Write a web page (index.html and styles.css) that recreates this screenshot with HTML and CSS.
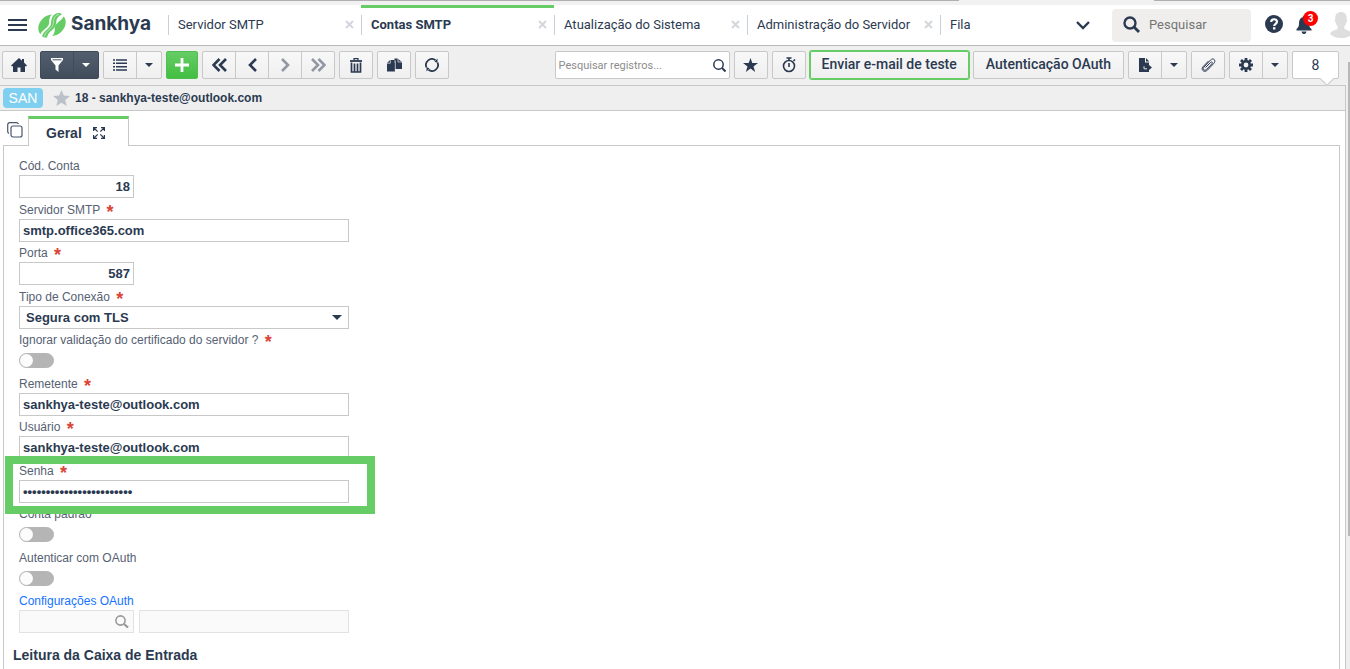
FILE: index.html
```html
<!DOCTYPE html>
<html lang="pt-BR">
<head>
    <meta charset="UTF-8">
    <meta name="viewport" content="width=device-width, initial-scale=1.0">
    <title>Contas SMTP</title>
    <link rel="stylesheet" href="styles.css">
</head>
<body>
    <div class="top-strip"></div>
    <header class="header">
        <button class="icon-button menu-button" aria-label="Menu">
            <svg width="19" height="12" viewBox="0 0 19 12"><path d="M0 1h19M0 6h19M0 11h19" stroke="#2b3a51" stroke-width="2"/></svg>
        </button>
        <a class="logo" href="#">
            <svg width="28" height="25" viewBox="0 0 28 25" fill="#66cc66">
                <path d="M14 1.500C12 3 11.300 5.500 11.200 8.500 11 12 10.500 13 7.500 15.500 5.500 17 3.700 18.500 2.500 21 1 20 0 17 .3 14.500 1 8 6.500 2 14 1.500z"/>
                <path d="M20 0c2 0 3 .3 4 1.200C20 3.500 18.500 5.500 18.300 9 18 13 17 14.500 13.500 17.500 11 19.500 10 21 9 24.500c-2 .3-3.500 0-5-1.200 1-2.800 2.500-4.800 5.500-7.300 3-2.500 3.500-4 3.700-7.500C13.500 4 16 .8 20 0z"/>
                <path d="M14 23C16 21.500 16.700 19 16.800 16 17 12.500 17.500 11.500 20.500 9c2-1.500 3.800-3 5-5.500C27 4.500 28 7.500 27.700 10 27 16.500 21.500 22.500 14 23z"/>
                <path d="M21 1.500c-4.500 1-5.300 4-5.500 7.500-.2 3.500-1.500 5-4 7.300C9 18.500 7.500 19.500 6.500 23.500" fill="none" stroke="#fff" stroke-width=".5"/>
            </svg>
            <span>Sankhya</span>
        </a>
        <nav class="tabs">
            <div class="tab"><a href="#">Servidor SMTP</a><button class="close" aria-label="Fechar"><svg width="9" height="9" viewBox="0 0 9 9"><path d="M1 1l7 7M8 1L1 8"/></svg></button></div>
            <div class="tab active"><a href="#">Contas SMTP</a><button class="close" aria-label="Fechar"><svg width="9" height="9" viewBox="0 0 9 9"><path d="M1 1l7 7M8 1L1 8"/></svg></button></div>
            <div class="tab"><a href="#">Atualização do Sistema</a><button class="close" aria-label="Fechar"><svg width="9" height="9" viewBox="0 0 9 9"><path d="M1 1l7 7M8 1L1 8"/></svg></button></div>
            <div class="tab"><a href="#">Administração do Servidor</a><button class="close" aria-label="Fechar"><svg width="9" height="9" viewBox="0 0 9 9"><path d="M1 1l7 7M8 1L1 8"/></svg></button></div>
            <div class="tab"><a href="#">Fila</a></div>
        </nav>
        <button class="icon-button more-tabs" aria-label="Mais abas">
            <svg width="14" height="9" viewBox="0 0 14 9"><path d="M1 1l6 6 6-6" fill="none" stroke="#2b3a51" stroke-width="2.400"/></svg>
        </button>
        <label class="global-search">
            <svg width="17" height="17" viewBox="0 0 17 17"><circle cx="7" cy="7" r="5.500" fill="none" stroke="#2b3a51" stroke-width="2.400"/><path d="M11 11l5 5" stroke="#2b3a51" stroke-width="2.800"/></svg>
            <input type="text" placeholder="Pesquisar" aria-label="Pesquisar">
        </label>
        <button class="icon-button help" aria-label="Ajuda">
            <svg width="18" height="18" viewBox="0 0 18 18"><circle cx="9" cy="9" r="9" fill="#2b3a51"/><path d="M6.200 7c0-3.600 5.800-3.600 5.800-.2C12 8.800 9.200 8.800 9.200 11" fill="none" stroke="#fff" stroke-width="2.200"/><rect x="8" y="12.200" width="2.400" height="2.300" fill="#fff"/></svg>
        </button>
        <button class="icon-button bell" aria-label="Notificações">
            <svg width="16" height="18" viewBox="0 0 16 18" fill="#2b3a51"><path d="M8 0c.8 0 1.300.6 1.300 1.300C12 2 13 4.500 13 7.500c0 3 .8 4 2.500 5.500v1.500H.5V13C2.200 11.500 3 10.500 3 7.500c0-3 1-5.500 3.700-6.200C6.700.6 7.200 0 8 0z"/><path d="M5.500 15.500h5C10 17.500 9 18 8 18s-2-.5-2.500-2.500z"/></svg>
            <span class="badge">3</span>
        </button>
        <svg class="avatar" width="22" height="28" viewBox="0 0 22 28" fill="#dedede"><path d="M11 1c3.700 0 6 2.300 6 6.500 0 1-.1 1.500.3 2 .3.700-.1 2-.8 2.500-.5 2-1 3-2 4v2c0 2 7.500 2 7.500 6C20 26.500 16 28 11 28S2 26.500 0 24c0-4 7.500-4 7.500-6v-2c-1-1-1.500-2-2-4-.7-.5-1.100-1.800-.8-2.500.4-.5.300-1 .3-2C5 3.300 7.300 1 11 1z"/></svg>
    </header>

    <main class="screen">
        <div class="toolbar">
            <div class="group"><button class="tool" aria-label="Início"><svg width="16" height="14" viewBox="0 0 16 14" fill="#2b3a51"><path d="M8 0l3 2.700V1h2v3.500l3 3-1 1L14 8v6H9.500V9.500h-3V14H2V8l-1 .5-1-1z"/></svg></button></div>
            <div class="group dark">
                <button class="tool" aria-label="Filtro"><svg width="12" height="14" viewBox="0 0 12 14"><path d="M0 0h12v2L7.500 7.500V14l-3-2.500v-4L0 2z" fill="#fff"/><path d="M1.500 1.800h9" stroke="#485363"/></svg></button>
                <button class="tool narrow" aria-label="Opções de filtro"><span class="caret"></span></button>
            </div>
            <div class="group">
                <button class="tool" aria-label="Lista"><svg width="14" height="12" viewBox="0 0 14 12" stroke="#2b3a51" stroke-width="1.500"><path d="M0 1h2M3 1h11M0 4.300h2M3 4.300h11M0 7.700h2M3 7.700h11M0 11h2M3 11h11"/></svg></button>
                <button class="tool narrow" aria-label="Opções de lista"><span class="caret"></span></button>
            </div>
            <div class="group green"><button class="tool" aria-label="Adicionar"><svg width="14" height="14" viewBox="0 0 14 14"><path d="M7 0v14M0 7h14" stroke="#fff" stroke-width="2.800"/></svg></button></div>
            <div class="group">
                <button class="tool" aria-label="Primeiro"><svg class="arrow" width="15" height="14" viewBox="0 0 15 14"><path d="M7.500 1l-6 6 6 6M14 1L8 7l6 6"/></svg></button>
                <button class="tool" aria-label="Anterior"><svg class="arrow" width="9" height="14" viewBox="0 0 9 14"><path d="M8 1L2 7l6 6"/></svg></button>
                <button class="tool" aria-label="Próximo" disabled><svg class="arrow" width="9" height="14" viewBox="0 0 9 14"><path d="M1 1l6 6-6 6"/></svg></button>
                <button class="tool" aria-label="Último" disabled><svg class="arrow" width="15" height="14" viewBox="0 0 15 14"><path d="M1 1l6 6-6 6M7.500 1l6 6-6 6"/></svg></button>
            </div>
            <div class="group"><button class="tool" aria-label="Excluir"><svg width="12" height="15" viewBox="0 0 12 15" fill="none" stroke="#2b3a51"><path d="M4 2.500V.600h4v1.900" stroke-width="1.200"/><path d="M0 3h12" stroke-width="1.800"/><path d="M1.500 4.500v9.500h9V4.500M4.500 5.500v8M7.500 5.500v8" stroke-width="1.700"/></svg></button></div>
            <div class="group"><button class="tool" aria-label="Duplicar"><svg width="15" height="14" viewBox="0 0 15 14" fill="#2b3a51"><path d="M7.500.500h3L15 4v7H7.500z"/><path d="M3 2h4.500v3H8v8.500H0V5z"/><path d="M0 5.200h3.300V2M11 .500V4h4M8.300 2.500v11" fill="none" stroke="#f2f2f2" stroke-width=".7"/></svg></button></div>
            <div class="group"><button class="tool" aria-label="Atualizar"><svg width="14" height="14" viewBox="0 0 14 14"><path d="M1.500 9.500A6 6 0 0 1 10.500 2.200M12.500 4.500A6 6 0 0 1 3.500 11.800" fill="none" stroke="#2b3a51" stroke-width="1.800"/><path d="M9.500 3.800L12.500.5v4.300zM4.500 10.200L1.500 13.500V9.200z" fill="#2b3a51"/></svg></button></div>

            <label class="record-search">
                <input type="text" placeholder="Pesquisar registros..." aria-label="Pesquisar registros">
                <svg width="13" height="13" viewBox="0 0 13 13" fill="none" stroke="#2b3a51"><circle cx="5.500" cy="5.500" r="4.700" stroke-width="1.500"/><path d="M9 9l3.500 3.500" stroke-width="2"/></svg>
            </label>
            <div class="group"><button class="tool" aria-label="Favorito"><svg width="15" height="14" viewBox="0 0 15 14" fill="#2b3a51"><path d="M7.500 0l1.800 5H15l-4.500 3.400L12.200 14 7.500 10.600 2.800 14l1.700-5.600L0 5h5.700z"/></svg></button></div>
            <div class="group"><button class="tool" aria-label="Cronômetro"><svg width="14" height="16" viewBox="0 0 14 16" fill="none" stroke="#2b3a51" stroke-width="1.600"><circle cx="7" cy="9" r="5.500"/><path d="M4.500 1h5M7 1v3M7 6v4M11.500 4L13 2.500"/></svg></button></div>
            <button class="text-button highlighted">Enviar e-mail de teste</button>
            <button class="text-button">Autenticação OAuth</button>
            <div class="group">
                <button class="tool" aria-label="Exportar"><svg width="13" height="14" viewBox="0 0 13 14" fill="#2b3a51"><path d="M0 0h6v4.500h4V7l3 2.500-3 2.500v2H0z"/><path d="M7 0l3.200 3.500H7z"/><path d="M5 8.200v2.600h3" fill="none" stroke="#f2f2f2" stroke-width=".9"/></svg></button>
                <button class="tool narrow" aria-label="Opções de exportação"><span class="caret"></span></button>
            </div>
            <div class="group"><button class="tool" aria-label="Anexos"><svg width="15" height="14" viewBox="0 0 15 14" fill="none" stroke="#2b3a51" stroke-width="1"><path d="M4.500 9.500l5-5c1.300-1.300 2.600 0 1.400 1.300L5.600 11.300c-2.200 2.200-4.600 0-2.600-2.300L9.500 2c3-2.800 6 .5 3.300 3.400L6.600 12c-3 3-7.200.200-4.700-3.200L7.500 3"/></svg></button></div>
            <div class="group">
                <button class="tool" aria-label="Configurações"><svg width="14" height="14" viewBox="0 0 14 14"><path d="M7 0v14M0 7h14M2 2l10 10M12 2L2 12" stroke="#2b3a51" stroke-width="2.800"/><circle cx="7" cy="7" r="3.700" fill="#f4f4f4" stroke="#2b3a51" stroke-width="2.600"/></svg></button>
                <button class="tool narrow" aria-label="Opções de configuração"><span class="caret"></span></button>
            </div>
            <div class="counter">8</div>
        </div>

        <div class="content">
            <div class="record-bar">
                <span class="tag">SAN</span>
                <svg width="17" height="16" viewBox="0 0 17 16" fill="#bcc0c8"><path d="M8.500 0l2.300 5.500 6.200.4-4.800 4 1.500 6.100-5.200-3.300L3.300 16l1.500-6.100-4.800-4 6.200-.4z"/></svg>
                <strong>18 - sankhya-teste@outlook.com</strong>
            </div>
            <div class="form-tabs">
                <button class="icon-button copy-button" aria-label="Modo grade"><svg width="16" height="16" viewBox="0 0 16 16" fill="none" stroke="#4a566b" stroke-width="1.200"><rect x="4" y="4" width="11" height="11" rx="2"/><path d="M2 11.500C1 11 .7 10.500.7 9.500V3C.7 1.500 1.500.700 3 .700h6.500c1 0 1.500.300 2 1.300"/></svg></button>
                <div class="form-tab">
                    <span>Geral</span>
                    <svg width="12" height="12" viewBox="0 0 12 12" fill="none" stroke="#2b3a51" stroke-width="1.200"><path d="M.6 4V.6H4M8 .6h3.400V4M11.400 8v3.400H8M4 11.400H.6V8M1 1l3.700 3.700M11 1L7.300 4.700M11 11L7.300 7.300M1 11l3.700-3.700"/></svg>
                </div>
            </div>
            <div class="panel">
                <form class="fields" autocomplete="off">
                    <div class="field">
                        <label for="codigo">Cód. Conta</label>
                        <input class="box short" id="codigo" type="text" value="18">
                    </div>
                    <div class="field">
                        <label for="servidor">Servidor SMTP <b class="required"></b></label>
                        <input class="box" id="servidor" type="text" value="smtp.office365.com">
                    </div>
                    <div class="field">
                        <label for="porta">Porta <b class="required"></b></label>
                        <input class="box short" id="porta" type="text" value="587">
                    </div>
                    <div class="field">
                        <label for="conexao">Tipo de Conexão <b class="required"></b></label>
                        <div class="select-wrap">
                            <select class="box" id="conexao"><option>Segura com TLS</option></select>
                        </div>
                    </div>
                    <div class="field">
                        <label for="ignorar">Ignorar validação do certificado do servidor ? <b class="required"></b></label>
                        <input class="toggle" id="ignorar" type="checkbox">
                    </div>
                    <div class="field">
                        <label for="remetente">Remetente <b class="required"></b></label>
                        <input class="box" id="remetente" type="text" value="sankhya-teste@outlook.com">
                    </div>
                    <div class="field">
                        <label for="usuario">Usuário <b class="required"></b></label>
                        <input class="box" id="usuario" type="text" value="sankhya-teste@outlook.com">
                    </div>
                    <div class="field marked">
                        <label for="senha">Senha <b class="required"></b></label>
                        <input class="box" id="senha" type="password" value="abcdefghijklmnopqrstuvwx">
                    </div>
                    <div class="field">
                        <label for="padrao">Conta padrão</label>
                        <input class="toggle" id="padrao" type="checkbox">
                    </div>
                    <div class="field">
                        <label for="oauth">Autenticar com OAuth</label>
                        <input class="toggle" id="oauth" type="checkbox">
                    </div>
                    <div class="field">
                        <label for="config"><a href="#">Configurações OAuth</a></label>
                        <div class="lookup">
                            <div class="lookup-code">
                                <input id="config" type="text" disabled>
                                <svg width="14" height="13" viewBox="0 0 14 13" fill="none" stroke="#999"><circle cx="5.500" cy="5.500" r="4.600" stroke-width="1.600"/><path d="M9 9l4 3.500" stroke-width="2.200"/></svg>
                            </div>
                            <input class="lookup-name" type="text" aria-label="Descrição da configuração" disabled>
                        </div>
                    </div>
                </form>
                <h2>Leitura da Caixa de Entrada</h2>
            </div>
        </div>
        <div class="scrollbar"></div>
    </main>
</body>
</html>
```

FILE: styles.css
```css
*,
*::before,
*::after {
    box-sizing: border-box;
}
body {
    margin: 0;
    height: 100vh;
    overflow: hidden;
    display: flex;
    flex-direction: column;
    background-color: #f0efef;
    color: #2b3a51;
    font-family: "Liberation Sans", Arial, sans-serif;
    font-size: 12px;
}
button,
input,
select {
    font: inherit;
    color: inherit;
    margin: 0;
    padding: 0;
}
a {
    color: inherit;
    text-decoration: none;
}
svg {
    display: block;
    flex: none;
}
.icon-button {
    border: 0;
    background: none;
    flex: none;
}

/* header */
.top-strip {
    flex: none;
    height: 5px;
    background: linear-gradient(to right, #b0aeb0 959px, transparent 959px, transparent 1154px, #b0aeb0 1154px) top / 100% 1px no-repeat #f2f1f2;
}
.header {
    flex: none;
    display: flex;
    align-items: center;
    height: 41px;
    padding-left: 8px;
    overflow: hidden;
    background-color: #fff;
    border-bottom: 1px solid #b8b8b8;
    font-family: Roboto, sans-serif;
    font-size: 13px;
}
.logo {
    display: flex;
    align-items: center;
    gap: 5px;
    width: 130px;
    margin-left: 11px;
    font-family: Inter, sans-serif;
    font-size: 19px;
    font-weight: 700;
    line-height: 24px;
}
.logo span {
    padding-bottom: 2px;
}
.tabs {
    flex: 1;
    min-width: 0;
    display: flex;
    align-self: stretch;
    overflow: hidden;
}
.tab {
    flex: 0 0 193px;
    display: flex;
    align-items: center;
    justify-content: space-between;
    padding: 0 7px 1px 10px;
    background: linear-gradient(#c9cfda, #c9cfda) left 10px / 1px 20px no-repeat;
}
.tab:last-child {
    flex: 1;
}
.tab.active {
    background: linear-gradient(#66cc66, #66cc66) top / 100% 3px no-repeat, linear-gradient(#c9cfda, #c9cfda) left 10px / 1px 20px no-repeat;
    font-weight: 700;
}
.close {
    border: 0;
    background: none;
}
.close path {
    stroke: #d3d6dc;
    stroke-width: 2;
}
.more-tabs {
    margin-right: 22px;
}
.global-search {
    flex: none;
    display: flex;
    align-items: center;
    gap: 9px;
    width: 139px;
    height: 33px;
    padding: 0 11px 2px;
    background-color: #f0eeed;
    border-radius: 4px;
}
.global-search input {
    width: 100%;
    min-width: 0;
    border: 0;
    background: none;
}
.help {
    margin-left: 14px;
    padding-bottom: 2px;
}
.bell {
    position: relative;
    margin-left: 13px;
}
.badge {
    position: absolute;
    top: -5px;
    left: 7px;
    width: 15px;
    height: 15px;
    border-radius: 50%;
    background-color: #f00;
    color: #fff;
    font-size: 10px;
    font-weight: 700;
    line-height: 15px;
}
.avatar {
    margin-left: 18px;
    margin-right: -2px;
    padding-bottom: 1px;
}

/* toolbar */
.screen {
    flex: 1;
    min-height: 0;
    display: flex;
    flex-direction: column;
    position: relative;
}
.toolbar {
    flex: none;
    display: flex;
    align-items: center;
    gap: 4px;
    height: 39px;
    padding: 0 11px 1px 2px;
}
.group {
    display: flex;
    height: 28px;
    border: 1px solid #c8c8c8;
    border-radius: 2px;
    background: linear-gradient(#f8f8f8, #efefef);
}
.tool {
    display: flex;
    align-items: center;
    justify-content: center;
    width: 32px;
    border: 0;
    background: none;
}
.tool + .tool {
    width: 33px;
    border-left: 1px solid #c8c8c8;
}
.tool + .narrow {
    width: 25px;
}
.caret {
    border: 4px solid transparent;
    border-top-color: #2b3a51;
    border-bottom: 0;
}
.dark {
    border-color: #3f4958;
    background: linear-gradient(#525d6e, #424d5c);
}
.dark .narrow {
    border-left-color: #414b5a;
}
.dark .caret {
    border-top-color: #fff;
}
.green {
    border-color: #4fc04f;
    background: linear-gradient(#66cc66, #42be42);
}
.green .tool {
    width: 30px;
}
.arrow {
    fill: none;
    stroke: #2b3a51;
    stroke-width: 2.6;
}
.tool:disabled .arrow {
    stroke: #9298a3;
}
.record-search {
    display: flex;
    align-items: center;
    width: 175px;
    height: 28px;
    margin-left: auto;
    padding: 0 3px;
    background-color: #fff;
    border: 1px solid #c8c8c8;
    border-radius: 2px;
}
.record-search input {
    flex: 1;
    min-width: 0;
    border: 0;
    font-family: Roboto, sans-serif;
    font-size: 11px;
}
.record-search input::placeholder {
    color: #8c8c8c;
}
.text-button {
    flex: none;
    height: 28px;
    padding: 0 12px 2px;
    border: 1px solid #c8c8c8;
    border-radius: 2px;
    background: linear-gradient(#f8f8f8, #efefef);
    font-family: Roboto, sans-serif;
    font-size: 14px;
    font-weight: 500;
}
.highlighted {
    padding: 0 11px 2px;
    border-color: #66cc66;
    box-shadow: 0 0 0 1px #66cc66;
}
.counter {
    position: relative;
    width: 47px;
    height: 28px;
    border: 1px solid #c8c8c8;
    border-radius: 2px;
    background-color: #fff;
    font-family: Roboto, sans-serif;
    font-size: 14px;
    line-height: 27px;
    text-align: center;
}
.counter::after {
    content: "";
    position: absolute;
    right: 6px;
    bottom: -6px;
    width: 10px;
    height: 10px;
    background-color: #fff;
    border: solid #c8c8c8;
    border-width: 0 1px 1px 0;
    transform: rotate(45deg);
}

/* record */
.content {
    flex: 1;
    min-height: 0;
    display: flex;
    flex-direction: column;
    margin-right: 4px;
    background-color: #fff;
    border-top: 1px solid #c8c8c8;
    border-right: 1px solid #c8c8c8;
}
.record-bar {
    flex: none;
    display: flex;
    align-items: center;
    height: 25px;
    padding-left: 3px;
    background-color: #efefef;
    border-bottom: 1px solid #c8c8c8;
}
.tag {
    width: 40px;
    height: 20px;
    margin-right: 10px;
    border-radius: 4px;
    background-color: #7fd0f0;
    color: #fff;
    font-size: 14px;
    line-height: 20px;
    text-align: center;
}
.record-bar strong {
    margin-left: 5px;
}
.form-tabs {
    flex: none;
    display: flex;
    height: 34px;
    padding-top: 5px;
}
.copy-button {
    width: 28px;
    padding: 0 0 1px 7px;
}
.form-tab {
    display: flex;
    align-items: center;
    gap: 11px;
    width: 101px;
    height: 30px;
    padding-left: 17px;
    background-color: #fff;
    border: 1px solid #c8c8c8;
    border-top: 3px solid #66cc66;
    border-bottom: 0;
    font-size: 14px;
    font-weight: 700;
    z-index: 1;
}
.panel {
    flex: 1;
    min-height: 0;
    margin: 0 5px 0 3px;
    padding: 11px 9px 0;
    overflow: hidden;
    border: 1px solid #c8c8c8;
    border-bottom: 0;
}
.fields {
    display: grid;
    grid-template-columns: 330px;
    grid-auto-rows: 44px 43px;
    padding-left: 6px;
}
.field label {
    display: block;
    width: max-content;
    color: #566173;
    line-height: 18px;
}
.field label a {
    color: #1473ff;
}
.required::before {
    content: "*";
    margin-left: 3px;
    color: #db4437;
    font-size: 18px;
    line-height: 1px;
    vertical-align: -4px;
}
.box {
    display: block;
    width: 100%;
    height: 23px;
    padding: 0 3px;
    border: 1px solid #c8c8c8;
    border-radius: 0;
    background-color: #fff;
    font-size: 13px;
    font-weight: 700;
}
.short {
    width: 115px;
    text-align: right;
}
.select-wrap {
    position: relative;
}
.select-wrap select {
    appearance: none;
    padding-left: 6px;
}
.select-wrap::after {
    content: "";
    position: absolute;
    top: 9px;
    right: 7px;
    border: 5px solid transparent;
    border-top-color: #2b3a51;
    border-bottom: 0;
}
.toggle {
    appearance: none;
    display: block;
    width: 35px;
    height: 15px;
    margin-top: 4px;
    border: 1px solid #b5b5b5;
    border-radius: 8px;
    background-color: #b5b5b5;
}
.toggle::before {
    content: "";
    display: block;
    width: 13px;
    height: 13px;
    border-radius: 50%;
    background-color: #fcfcfc;
}
.marked {
    position: relative;
    z-index: 1;
}
.marked::after {
    content: "";
    position: absolute;
    top: -6px;
    left: -14px;
    width: 370px;
    height: 58px;
    border: 8px solid #66cc66;
    pointer-events: none;
}
.lookup {
    display: flex;
    gap: 5px;
}
.lookup-code,
.lookup-name {
    height: 23px;
    border: 1px solid #e2e2e2;
    background-color: #fafafa;
}
.lookup-code {
    display: flex;
    align-items: center;
    width: 115px;
    padding: 0 4px;
}
.lookup-code input {
    flex: 1;
    min-width: 0;
    border: 0;
    background: none;
}
.lookup-name {
    flex: 1;
    min-width: 0;
}
h2 {
    margin: 11px 0 0;
    font-size: 14px;
    line-height: 16px;
}
.scrollbar {
    position: absolute;
    top: 16px;
    right: 0;
    width: 2px;
    height: 474px;
    background-color: #b8b8b8;
}
```
